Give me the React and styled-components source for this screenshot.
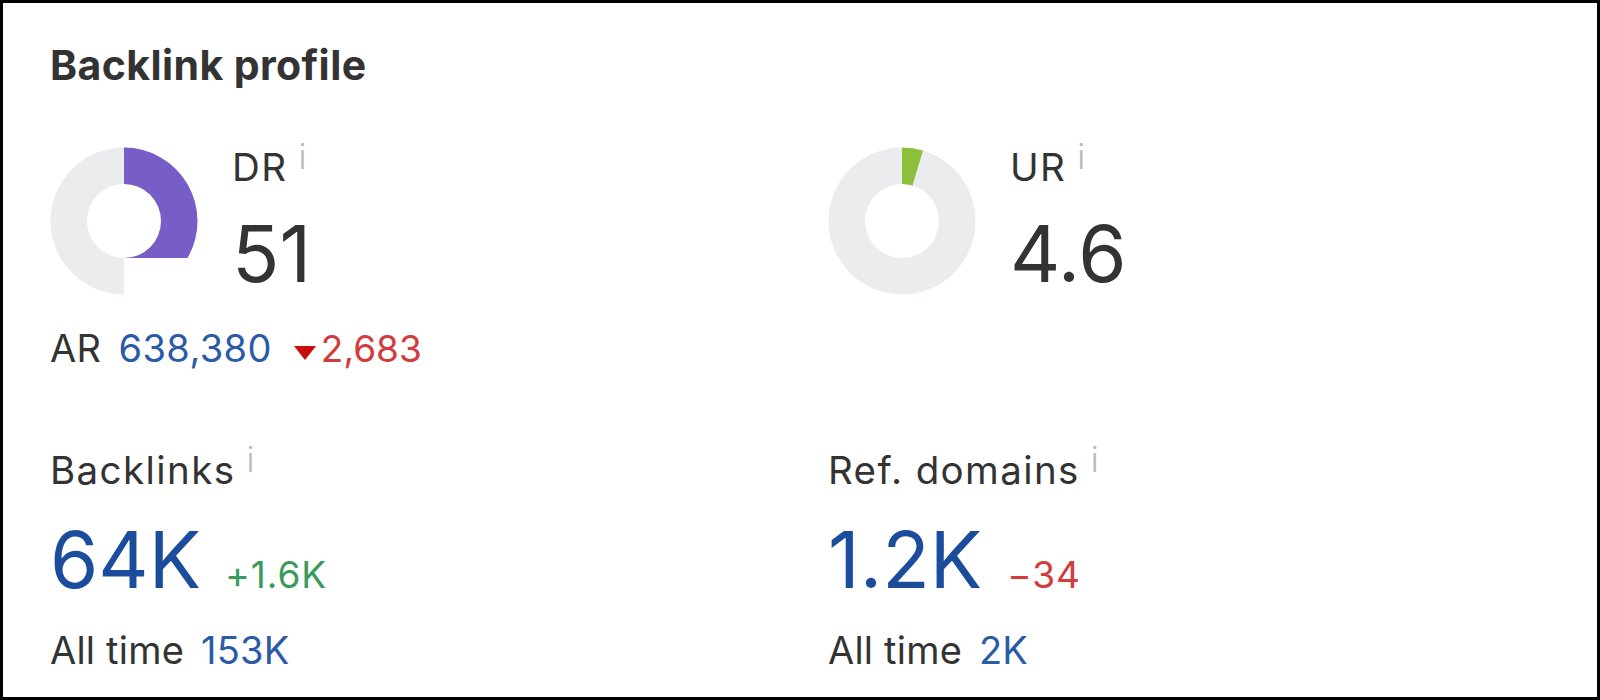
import React from 'react';
import styled, { createGlobalStyle } from 'styled-components';

const GlobalStyle = createGlobalStyle`
  html, body {
    margin: 0;
    padding: 0;
    background: #fff;
  }
  body {
    font-family: Inter, "Liberation Sans", Arial, sans-serif;
    color: #333;
  }
  * { box-sizing: border-box; }
`;

const Card = styled.section`
  width: 1600px;
  height: 700px;
  border: 3px solid #000;
  background: #fff;
  padding: 42px 47px 0;
  overflow: hidden;
`;

const Title = styled.h2`
  margin: 0;
  font-size: 41px;
  line-height: 40px;
  font-weight: 700;
  color: #333;
  letter-spacing: 0.4px;
`;

const Grid = styled.div`
  display: grid;
  grid-template-columns: 778px 1fr;
  row-gap: 84px;
  margin-top: 62px;
`;

const Cell = styled.div`
  display: flex;
  flex-direction: column;
  align-items: flex-start;
`;

const Rating = styled.div`
  display: flex;
  align-items: flex-start;
  gap: 34px;
`;

const RatingText = styled.div`
  display: flex;
  flex-direction: column;
  padding-top: 1px;
`;

const Label = styled.div`
  font-size: 38.5px;
  line-height: 38px;
  font-weight: 400;
  letter-spacing: 1.4px;
  color: #333;
  white-space: nowrap;
`;

const Info = styled.span`
  font-size: 34px;
  font-weight: 300;
  color: #b8b8b8;
  margin-left: 11px;
  vertical-align: 12px;
  line-height: 0;
  letter-spacing: 0;
`;

const BigNumber = styled.div`
  font-size: 78px;
  line-height: 78px;
  font-weight: 400;
  color: ${(p) => p.$color || '#333'};
  margin-top: ${(p) => p.$gap || 0}px;
`;

const ArRow = styled.div`
  margin-top: 35px;
  font-size: 38px;
  line-height: 37px;
  letter-spacing: 0.4px;
  white-space: nowrap;
`;

const Muted = styled.span`
  color: #333;
`;

const Link = styled.span`
  color: #2b5ba6;
  margin-left: ${(p) => p.$gap || 0}px;
`;

const Change = styled.span`
  color: ${(p) => (p.$up ? '#3a9a5b' : '#d23c3c')};
  font-size: ${(p) => p.$size || 37}px;
  letter-spacing: ${(p) => (p.$size ? 0 : 1)}px;
  margin-left: ${(p) => p.$gap || 0}px;
`;

const Triangle = styled.svg`
  width: 22px;
  height: 14px;
  margin-left: 22px;
  margin-right: 5px;
  vertical-align: 2px;
`;

const ValueRow = styled.div`
  display: flex;
  align-items: baseline;
  margin-top: 32px;
`;

const AllTime = styled.div`
  margin-top: 33px;
  font-size: 38px;
  line-height: 37px;
  letter-spacing: 0.2px;
  white-space: nowrap;
`;

const R = 73.5;
const r = 37;
const C = 74;

const ringPath = `M ${C} ${C - R} A ${R} ${R} 0 1 1 ${C} ${C + R} A ${R} ${R} 0 1 1 ${C} ${C - R} Z M ${C} ${C - r} A ${r} ${r} 0 1 0 ${C} ${C + r} A ${r} ${r} 0 1 0 ${C} ${C - r} Z`;

function DrDonut() {
  const cut = C + r;
  const ox = C + Math.sqrt(R * R - r * r);
  return (
    <svg width="148" height="148" viewBox="0 0 148 148">
      <path
        d={`M ${C} ${C - R} A ${R} ${R} 0 0 0 ${C} ${C + R} L ${C} ${cut} A ${r} ${r} 0 0 1 ${C} ${C - r} Z`}
        fill="#ebecee"
      />
      <path
        d={`M ${C} ${C - R} A ${R} ${R} 0 0 1 ${ox} ${cut} L ${C} ${cut} A ${r} ${r} 0 0 0 ${C} ${C - r} Z`}
        fill="#775ec6"
      />
    </svg>
  );
}

function UrDonut({ value }) {
  const a = (value / 100) * Math.PI * 2;
  const ox = C + R * Math.sin(a);
  const oy = C - R * Math.cos(a);
  const ix = C + r * Math.sin(a);
  const iy = C - r * Math.cos(a);
  return (
    <svg width="148" height="148" viewBox="0 0 148 148">
      <path d={ringPath} fill="#ebecee" fillRule="evenodd" />
      <path
        d={`M ${C} ${C - R} A ${R} ${R} 0 0 1 ${ox} ${oy} L ${ix} ${iy} A ${r} ${r} 0 0 0 ${C} ${C - r} Z`}
        fill="#8cbf3c"
      />
    </svg>
  );
}

export default function App() {
  return (
    <>
      <GlobalStyle />
      <Card>
        <Title>Backlink profile</Title>
        <Grid>
          <Cell>
            <Rating>
              <DrDonut />
              <RatingText>
                <Label>
                  DR<Info>i</Info>
                </Label>
                <BigNumber $gap={29}>51</BigNumber>
              </RatingText>
            </Rating>
            <ArRow>
              <Muted>AR</Muted>
              <Link $gap={17}>638,380</Link>
              <Triangle viewBox="0 0 22 14">
                <polygon points="0,0 22,0 11,14" fill="#c90d0d" />
              </Triangle>
              <Change $size={37}>2,683</Change>
            </ArRow>
          </Cell>
          <Cell>
            <Rating>
              <UrDonut value={4.6} />
              <RatingText>
                <Label>
                  UR<Info>i</Info>
                </Label>
                <BigNumber $gap={29}>4.6</BigNumber>
              </RatingText>
            </Rating>
          </Cell>
          <Cell>
            <Label>
              Backlinks<Info>i</Info>
            </Label>
            <ValueRow>
              <BigNumber $color="#1c4d9d">64K</BigNumber>
              <Change $up $gap={24}>+1.6K</Change>
            </ValueRow>
            <AllTime>
              <Muted>All time</Muted>
              <Link $gap={17}>153K</Link>
            </AllTime>
          </Cell>
          <Cell>
            <Label>
              Ref. domains<Info>i</Info>
            </Label>
            <ValueRow>
              <BigNumber $color="#1c4d9d">1.2K</BigNumber>
              <Change $gap={25}>−34</Change>
            </ValueRow>
            <AllTime>
              <Muted>All time</Muted>
              <Link $gap={17}>2K</Link>
            </AllTime>
          </Cell>
        </Grid>
      </Card>
    </>
  );
}
